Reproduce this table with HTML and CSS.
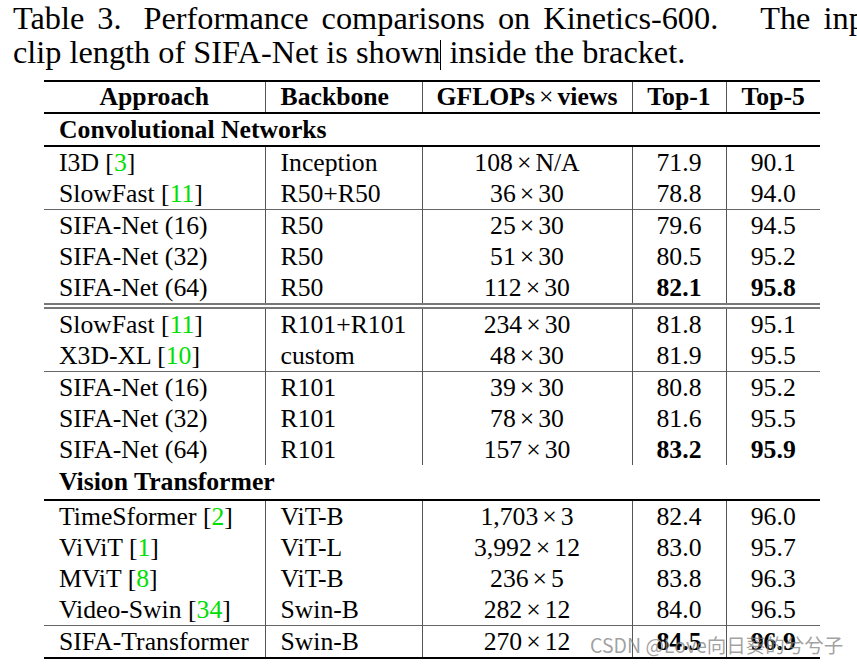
FILE: index.html
```html
<!DOCTYPE html>
<html>
<head>
<meta charset="utf-8">
<link rel="stylesheet" href="styles.css">
</head>
<body>
<div class="page">
  <div class="caption">
    <div class="cap-line l1">Table 3.<span class="wide w1"></span>Performance comparisons on Kinetics-600.<span class="wide w2"></span>The input</div>
    <div class="cap-line l2">clip length of SIFA-Net is shown<span class="cursor"></span> inside the bracket.</div>
  </div>
  <table class="results">
    <colgroup>
      <col class="c1"><col class="c2"><col class="c3"><col class="c4"><col class="c5">
    </colgroup>
    <thead>
      <tr>
        <th class="center">Approach</th>
        <th class="left">Backbone</th>
        <th>GFLOPs<span class="x">×</span>views</th>
        <th>Top-1</th>
        <th>Top-5</th>
      </tr>
    </thead>
    <tbody>
      <tr class="section"><td colspan="5">Convolutional Networks</td></tr>
      <tr><td>I3D [<span class="cite">3</span>]</td><td>Inception</td><td>108<span class="x">×</span>N/A</td><td>71.9</td><td>90.1</td></tr>
      <tr><td>SlowFast [<span class="cite">11</span>]</td><td>R50+R50</td><td>36<span class="x">×</span>30</td><td>78.8</td><td>94.0</td></tr>
      <tr class="sep"><td>SIFA-Net (16)</td><td>R50</td><td>25<span class="x">×</span>30</td><td>79.6</td><td>94.5</td></tr>
      <tr><td>SIFA-Net (32)</td><td>R50</td><td>51<span class="x">×</span>30</td><td>80.5</td><td>95.2</td></tr>
      <tr><td>SIFA-Net (64)</td><td>R50</td><td>112<span class="x">×</span>30</td><td class="b">82.1</td><td class="b">95.8</td></tr>
      <tr class="double"><td colspan="5"></td></tr>
      <tr><td>SlowFast [<span class="cite">11</span>]</td><td>R101+R101</td><td>234<span class="x">×</span>30</td><td>81.8</td><td>95.1</td></tr>
      <tr><td>X3D-XL [<span class="cite">10</span>]</td><td>custom</td><td>48<span class="x">×</span>30</td><td>81.9</td><td>95.5</td></tr>
      <tr class="sep"><td>SIFA-Net (16)</td><td>R101</td><td>39<span class="x">×</span>30</td><td>80.8</td><td>95.2</td></tr>
      <tr><td>SIFA-Net (32)</td><td>R101</td><td>78<span class="x">×</span>30</td><td>81.6</td><td>95.5</td></tr>
      <tr><td>SIFA-Net (64)</td><td>R101</td><td>157<span class="x">×</span>30</td><td class="b">83.2</td><td class="b">95.9</td></tr>
      <tr class="section vt"><td colspan="5">Vision Transformer</td></tr>
      <tr><td>TimeSformer [<span class="cite">2</span>]</td><td>ViT-B</td><td>1,703<span class="x">×</span>3</td><td>82.4</td><td>96.0</td></tr>
      <tr><td>ViViT [<span class="cite">1</span>]</td><td>ViT-L</td><td>3,992<span class="x">×</span>12</td><td>83.0</td><td>95.7</td></tr>
      <tr><td>MViT [<span class="cite">8</span>]</td><td>ViT-B</td><td>236<span class="x">×</span>5</td><td>83.8</td><td>96.3</td></tr>
      <tr><td>Video-Swin [<span class="cite">34</span>]</td><td>Swin-B</td><td>282<span class="x">×</span>12</td><td>84.0</td><td>96.5</td></tr>
      <tr class="sep last"><td>SIFA-Transformer</td><td>Swin-B</td><td>270<span class="x">×</span>12</td><td class="b">84.5</td><td class="b">96.9</td></tr>
    </tbody>
  </table>
  <div class="watermark">CSDN @Love向日葵的兮兮子</div>
</div>
</body>
</html>
```
FILE: styles.css
```css
html, body {
  margin: 0;
  padding: 0;
  background: #fff;
}
body {
  width: 857px;
  height: 666px;
  overflow: hidden;
  font-family: "Liberation Serif", "Times New Roman", serif;
  color: #000;
}
.page {
  position: relative;
  width: 857px;
  height: 666px;
}
.caption {
  padding: 1px 0 0 13px;
  font-size: 32.3px;
  line-height: 34px;
}
.cap-line {
  white-space: nowrap;
}
.l1 {
  word-spacing: 5px;
}
.wide {
  display: inline-block;
}
.w1 {
  width: 22px;
}
.w2 {
  width: 42px;
}
.cursor {
  display: inline-block;
  width: 0;
  height: 30px;
  border-left: 1px solid #000;
  vertical-align: -7px;
}
.results {
  margin: 10px 0 0 44px;
  width: 776px;
  table-layout: fixed;
  border-collapse: collapse;
  font-size: 25.7px;
  line-height: 28px;
}
.c1 { width: 221px; }
.c2 { width: 157px; }
.c3 { width: 210px; }
.c4 { width: 94px; }
.c5 { width: 94px; }
.results th {
  font-weight: bold;
  height: 30px;
  padding: 0;
  text-align: center;
  border-top: 2px solid #000;
  border-bottom: 2px solid #000;
}
.results th.left {
  text-align: left;
  padding-left: 15px;
}
.x {
  font-weight: normal;
  margin: 0 4px;
}
.results td {
  height: 31px;
  padding: 0;
  text-align: center;
  white-space: nowrap;
}
.results th + th,
.results td + td {
  border-left: 1px solid #555;
}
.results td:first-child,
.results td:nth-child(2) {
  text-align: left;
  padding-left: 15px;
}
.results tr.section td {
  font-weight: bold;
  height: 31px;
  border-bottom: 2px solid #000;
  padding-left: 15px;
  text-align: left;
}
.results tr.section.vt td {
  height: 34px;
}
.results tr.sep td {
  border-top: 1px solid #666;
}
.results tr.double td {
  height: 2px;
  padding: 0;
  border-top: 2px solid #777;
  border-bottom: 2px solid #777;
}
.results tr.last td {
  border-bottom: 2px solid #000;
  height: 31px;
}
.results td.b {
  font-weight: bold;
}
.cite {
  color: #00e000;
}
.watermark {
  position: absolute;
  left: 590px;
  top: 633px;
  font-family: "Noto Sans CJK SC", "Noto Sans", sans-serif;
  font-size: 19.5px;
  line-height: 24px;
  color: rgba(130, 130, 130, 0.75);
  white-space: nowrap;
}
```
